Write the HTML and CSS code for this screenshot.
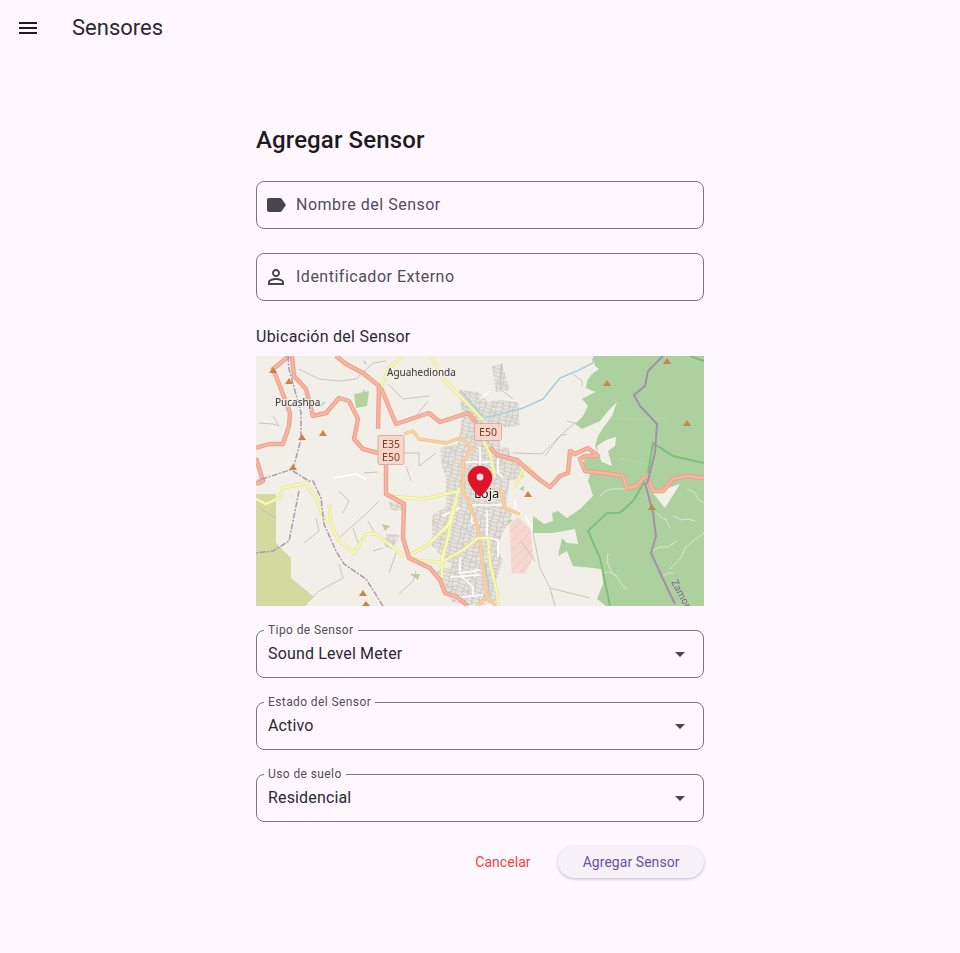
FILE: index.html
```html
<!DOCTYPE html>
<html lang="en">
<head>
    <meta charset="UTF-8">
    <meta name="viewport" content="width=device-width, initial-scale=1.0">
    <title>Sensores</title>
    <link rel="stylesheet" href="styles.css">
</head>
<body>
    <header class="app-bar">
        <span class="app-bar-icon">
            <svg viewBox="0 0 24 24" width="24" height="24"><path d="M3 18h18v-2H3v2zm0-5h18v-2H3v2zm0-7v2h18V6H3z"/></svg>
        </span>
        <h1 class="app-bar-title">Sensores</h1>
    </header>

    <main class="form-page">
        <h2 class="form-title">Agregar Sensor</h2>

        <div class="text-field">
            <svg class="field-icon" viewBox="0 0 24 24" width="24" height="24"><path d="M17.63 5.84C17.27 5.33 16.67 5 16 5L5 5.01C3.9 5.01 3 5.9 3 7v10c0 1.1.9 1.99 2 1.99L16 19c.67 0 1.27-.33 1.63-.84L22 12l-4.37-6.16z"/></svg>
            <span class="field-hint">Nombre del Sensor</span>
        </div>

        <div class="text-field">
            <svg class="field-icon" viewBox="0 0 24 24" width="24" height="24"><path d="M12 5.9c1.16 0 2.1.94 2.1 2.1s-.94 2.1-2.1 2.1S9.9 9.16 9.9 8s.94-2.1 2.1-2.1m0 9c2.97 0 6.1 1.46 6.1 2.1v1.1H5.9V17c0-.64 3.13-2.1 6.1-2.1M12 4C9.79 4 8 5.79 8 8s1.79 4 4 4 4-1.79 4-4-1.79-4-4-4zm0 9c-2.67 0-8 1.34-8 4v3h16v-3c0-2.66-5.33-4-8-4z"/></svg>
            <span class="field-hint">Identificador Externo</span>
        </div>

        <div class="map-label">Ubicación del Sensor</div>

        <div class="map">
            <svg viewBox="0 0 448 250" width="448" height="250">
                <defs>
                    <pattern id="urban" width="17" height="15" patternUnits="userSpaceOnUse" patternTransform="rotate(14)">
                        <rect width="17" height="15" fill="#e8e5df"/>
                        <path d="M0 2L5 3L9 1L17 3M0 6L4 7L11 5L17 7M0 10L7 12L12 9L17 11M0 14L6 13L17 14M3 0L4 7L2 15M8 0L7 6L9 15M13 0L14 8L12 15" fill="none" stroke="#bab7b2" stroke-width=".6"/>
                    </pattern>
                    <pattern id="hatch" width="7" height="7" patternUnits="userSpaceOnUse" patternTransform="rotate(-45)">
                        <rect width="7" height="7" fill="#f5d9d1"/>
                        <path d="M0 3.500h7" stroke="#f0c8bd" stroke-width=".8"/>
                    </pattern>
                    <path id="trunk" d="M33 0L17 13L25 33L34 57L33 70L27 88L13 88L0 92M36 0L38 20L50 33L57 60L70 57L83 42L93 45L102 63L98 83L107 93L122 97M80 0L90 8L107 17L123 30L122 73M130 108V138L148 148L147 182L153 202L174 212L184 224L189 237L201 241L212 250M125 32L140 68L173 57L184 66L212 57L221 67M234 91L241 99L261 104L272 114L284 124L294 131L304 120L312 117L314 95L319 98L332 92L342 100L329 100L324 103L329 115L347 117L367 120L371 132L381 130L389 120M391 120L397 135L407 135L417 123L431 120L448 122M0 102L7 125L0 128"/>
                    <path id="tertiary" d="M147 0L133 12L125 30M175 0L187 23L207 43L227 64M227 84L234 97L239 121M259 131L267 113L274 112L281 125M0 143L10 148L23 142L27 132L50 127L60 142L70 168M73 148L75 168L83 185L98 197L110 178L120 178L148 200M132 140L167 143L203 135M152 200L173 188L193 168L203 132M185 212L190 188L202 135M174 186L191 171L201 144M194 176L186 202L186 222M153 202L167 205L186 206L207 194L222 182L232 182L234 207L241 237L242 250"/>
                    <path id="secondary" d="M148 78L157 75L163 83L190 87L204 82L216 91L207 107L207 137L212 144L222 171L227 211L231 241L221 250M231 241L240 250M244 132L249 152L264 158"/>
                </defs>

                <rect width="448" height="250" fill="#f2efe9"/>

                <path class="forest" d="M337 0L339 10L343 13L336 18L331 25L330 32L339 36L326 43L332 50L327 60L319 68L326 73L344 65L352 55L361 46L356 60L347 72L342 80L339 90L342 98L329 100L327 113L334 118L332 125L334 130L337 140L324 153L311 162L302 155L296 157L297 165L288 168L277 160L277 177L297 177L319 173L322 188L311 187L306 182L302 200L311 195L317 210L346 213L347 228L341 243L350 250H448V0Z"/>
                <path class="cream" d="M341 90L350 84L360 81L359 90L352 95L356 110L346 106L342 98ZM397 137L424 128L409 152ZM287 155A5 5 0 1 1 286.900 155Z"/>
                <path class="vein" d="M401 157L406 162L410 163L414 172M417 160L426 164L432 163L439 165M396 195L404 191L412 191L421 185M414 213L424 203L430 191L437 185L448 177M407 220L412 217L417 217M431 133L438 136L443 144L448 147M352 197L351 206L356 217L362 222L366 229L371 233M346 217L353 216L361 220M344 140L351 134L357 133L370 133"/>
                <path class="vein-thin" d="M362 102L391 108M356 62L385 63M385 63L410 62"/>

                <path class="olive" d="M0 138H20V187L35 202V222L57 240L50 250H0Z"/>
                <path class="hatch" d="M254 169L262 161L274 174L277 201L269 217L256 217Z"/>
                <path class="park" d="M98 38L113 35L111 50L100 52ZM126 168L134 170L129 175ZM154 218H164L162 224ZM239 161L257 164L249 171ZM216 197L222 199L222 209L216 208ZM263 133L268 130L268 135Z"/>

                <path class="urban" d="M203 34L222 36L232 46L240 44L262 46L264 70L244 72L244 92L262 106L268 122L254 124L250 150L256 158L240 192L247 204L240 225L240 245L222 250L196 246L190 235L178 216L196 210L176 190L176 160L190 150L190 122L186 110L184 92L202 88L206 62Z"/>
                <path class="urban" d="M236 10L246 8L254 34L240 36ZM130 178L144 178L137 194L128 190ZM132 146L148 146L150 155L135 154ZM234 90L252 92L262 118L244 118Z"/>

                <path class="track" d="M43 13L63 23L83 25L100 23L117 7L130 5M3 67L17 68L23 70L17 60M132 28L147 43L173 40M140 68L160 63M148 97L163 97L163 110L180 97M3 152L20 162M48 187L63 175L60 162M87 157L93 145L83 135M83 182L110 158L123 145M133 217L140 197M83 208L87 222L63 235L53 245M143 238L157 225L160 215M127 192L117 195M277 177L284 212L294 232L334 242M294 232L299 250M265 185L279 205M257 97L286 98L306 78L319 67M289 100L304 80L311 78M246 7L244 33L257 43M311 65L324 68M317 18L326 25L326 30M97 172L103 190M112 165L118 176M160 60L172 45M150 110L155 125M108 117L122 116"/>
                <path class="white-road" d="M216 149H249M216 154V167H224M231 154V181L242 184V201M269 159L276 172M204 201V217L224 214M194 221L224 219M204 219L217 231V241M204 241L227 239M259 144V154L266 157M224 43L234 35M209 106H234M224 91V111M242 102V117L247 122M186 160L204 152M77 122L100 118L110 123"/>
                <path class="river" d="M175 0L187 23L215 50M204 34L221 54L227 62L244 58L267 52L287 43L304 22L321 15L337 7V2M229 207L234 241M108 5L110 8M107 38L108 34M64 50L69 46"/>
                <path class="boundary-green" d="M448 107L417 100L397 87L392 117M434 0L448 5M389 125L377 145L364 157L351 157L332 175L344 202L354 250"/>

                <use href="#secondary" class="casing-secondary"/>
                <use href="#secondary" class="fill-secondary"/>
                <use href="#tertiary" class="casing-tertiary"/>
                <use href="#tertiary" class="fill-tertiary"/>
                <use href="#trunk" class="casing-trunk"/>
                <use href="#trunk" class="fill-trunk"/>

                <path class="admin" d="M32 0L33 13L45 57L45 83L37 113L0 125M37 115L53 125L57 125L65 142L68 168L80 195L88 208L110 223L127 250M43 135L33 185L17 195L0 197"/>
                <path class="admin-solid" d="M407 0L392 15L389 30L378 39L384 50L401 68L399 97L391 128M389 127L397 157L400 180L395 197L407 223L419 248"/>

                <path class="peaks" d="M17 11l4 6h-8zM33 22l4 6h-8zM46 78l4 6h-8zM67 74l4 6h-8zM37 108l4 6h-8zM351 24l4 6h-8zM411 2l4 6h-8zM431 64l4 6h-8zM107 234l4 6h-8zM110 245l4 5h-8zM272 135l4 6h-8zM396 148l4 6h-8z"/>

                <text class="place" x="131" y="20">Aguahedionda</text>
                <text class="place" x="19" y="50">Pucashpa</text>
                <text class="place place-dark" x="218" y="142">Loja</text>
                <text class="place place-small" transform="translate(415 226) rotate(62)">Zamora</text>

                <rect class="shield" x="122" y="79.500" width="26" height="29" rx="2"/>
                <text class="shield-text" x="135" y="92">E35</text>
                <text class="shield-text" x="135" y="104.500">E50</text>
                <rect class="shield" x="218.500" y="67.500" width="27" height="17" rx="2"/>
                <text class="shield-text" x="232" y="80">E50</text>

                <g transform="translate(212 110)">
                    <path class="pin" d="M12 0C5.400 0 0 5.200 0 11.800C0 20 12 31 12 31C12 31 24 20 24 11.800C24 5.200 18.600 0 12 0Z"/>
                    <circle cx="12" cy="11" r="3.400" fill="#efe3e3"/>
                </g>
            </svg>
        </div>

        <div class="select-field">
            <span class="select-label">Tipo de Sensor</span>
            <span class="select-value">Sound Level Meter</span>
            <svg class="select-arrow" viewBox="0 0 24 24" width="24" height="24"><path d="M7 10l5 5 5-5z"/></svg>
        </div>

        <div class="select-field">
            <span class="select-label">Estado del Sensor</span>
            <span class="select-value">Activo</span>
            <svg class="select-arrow" viewBox="0 0 24 24" width="24" height="24"><path d="M7 10l5 5 5-5z"/></svg>
        </div>

        <div class="select-field">
            <span class="select-label">Uso de suelo</span>
            <span class="select-value">Residencial</span>
            <svg class="select-arrow" viewBox="0 0 24 24" width="24" height="24"><path d="M7 10l5 5 5-5z"/></svg>
        </div>

        <div class="form-actions">
            <button class="btn-cancel" type="button">Cancelar</button>
            <button class="btn-submit" type="button">Agregar Sensor</button>
        </div>
    </main>
</body>
</html>
```

FILE: styles.css
```css
html, body {
    height: 100%;
}

body {
    font-family: "Roboto", sans-serif;
    background-color: #fef7ff;
    color: #1d1b20;
    margin: 0;
    padding: 0;
}

.app-bar {
    display: flex;
    align-items: center;
    height: 56px;
}

.app-bar-icon {
    display: flex;
    margin-left: 16px;
    fill: #1d1b20;
}

.app-bar-title {
    margin: 0 0 0 32px;
    font-size: 22px;
    font-weight: 400;
    line-height: 28px;
    color: #2b2930;
}

.form-page {
    width: 448px;
    margin: 0 auto;
}

.form-title {
    margin: 68px 0 25px;
    font-size: 24px;
    font-weight: 500;
    line-height: 32px;
    letter-spacing: 0.12px;
    color: #1d1b20;
}

.text-field {
    display: flex;
    align-items: center;
    gap: 8px;
    box-sizing: border-box;
    height: 48px;
    margin-bottom: 24px;
    padding: 0 7px;
    border: 1px solid #79747e;
    border-radius: 8px;
}

.field-icon {
    fill: #49454f;
    flex: none;
}

.field-hint {
    margin-bottom: 2px;
    font-size: 16px;
    letter-spacing: 0.5px;
    color: #514d57;
}

.map-label {
    margin-bottom: 7px;
    font-size: 16px;
    line-height: 24px;
    letter-spacing: 0.25px;
    color: #2b2930;
}

.map {
    height: 250px;
    margin-bottom: 24px;
    overflow: hidden;
}

.map svg {
    display: block;
    filter: blur(0.35px);
}

.forest { fill: #add19e; }
.cream { fill: #f2efe9; }
.olive { fill: #d4d99f; }
.hatch { fill: url(#hatch); stroke: #f2d0c6; stroke-width: 0.6; }
.park { fill: #b5d29a; }
.urban { fill: url(#urban); filter: blur(0.7px); }

.vein { fill: none; stroke: #e6eedf; stroke-width: 0.9; opacity: 0.8; }
.vein-thin { fill: none; stroke: #bcdab0; stroke-width: 0.6; }
.track { fill: none; stroke: #bdbbb6; stroke-width: 0.8; }
.white-road { fill: none; stroke: #fff; stroke-width: 1.6; }
.river { fill: none; stroke: #a9d0df; stroke-width: 1.6; }
.boundary-green { fill: none; stroke: #7fbf7c; stroke-width: 2; }
.admin { fill: none; stroke: #ab98b4; stroke-width: 1.5; stroke-dasharray: 6 1.5 2 1.5; }
.admin-solid { fill: none; stroke: #a390ac; stroke-width: 2; }

.casing-trunk { fill: none; stroke: #ec9f8a; stroke-width: 4.4; stroke-linejoin: round; }
.fill-trunk { fill: none; stroke: #f8b5a1; stroke-width: 2.4; stroke-linejoin: round; }
.casing-secondary { fill: none; stroke: #f4c28f; stroke-width: 3.4; stroke-linejoin: round; }
.fill-secondary { fill: none; stroke: #fbd3a2; stroke-width: 1.6; stroke-linejoin: round; }
.casing-tertiary { fill: none; stroke: #e6e596; stroke-width: 3.4; stroke-linejoin: round; }
.fill-tertiary { fill: none; stroke: #f7f9ba; stroke-width: 1.8; stroke-linejoin: round; }

.peaks { fill: #c9844a; }

.place {
    font-family: "Noto Sans", sans-serif;
    font-size: 10px;
    fill: #333;
    stroke: #f2efe9;
    stroke-width: 2px;
    paint-order: stroke;
}

.place-dark {
    font-size: 13px;
    fill: #111;
}

.place-small {
    font-size: 10px;
    fill: #7d6490;
    stroke: none;
}

.shield {
    fill: #f8d7cb;
    stroke: #dcae9f;
    stroke-width: 1;
}

.shield-text {
    font-family: "Noto Sans", sans-serif;
    font-size: 10.500px;
    text-anchor: middle;
    fill: #7a3a2c;
}

.pin {
    fill: #e0132a;
    stroke: #b80f22;
    stroke-width: 0.5;
}

.select-field {
    position: relative;
    display: flex;
    align-items: center;
    justify-content: space-between;
    box-sizing: border-box;
    height: 48px;
    margin-bottom: 24px;
    padding: 0 11px;
    border: 1px solid #79747e;
    border-radius: 8px;
}

.select-label {
    position: absolute;
    top: -9px;
    left: 7px;
    padding: 0 4px;
    font-size: 12px;
    line-height: 16px;
    letter-spacing: 0.4px;
    color: #514d57;
    background-color: #fef7ff;
}

.select-value {
    margin-bottom: 2px;
    font-size: 16px;
    letter-spacing: 0.15px;
    color: #2b2930;
}

.select-arrow {
    fill: #49454f;
    flex: none;
}

.form-actions {
    display: flex;
    justify-content: flex-end;
    align-items: center;
    gap: 3px;
    margin-top: 24px;
}

.form-actions button {
    height: 32px;
    padding: 0 24.5px;
    font-family: inherit;
    font-size: 14px;
    font-weight: 400;
    letter-spacing: 0.05px;
    border: none;
    border-radius: 16px;
    cursor: pointer;
}

.btn-cancel {
    color: #f44336;
    background: none;
}

.btn-submit {
    color: #6750a4;
    background-color: #f7f2fa;
    box-shadow: 0px 1px 3px rgba(0, 0, 0, 0.25);
}
```
